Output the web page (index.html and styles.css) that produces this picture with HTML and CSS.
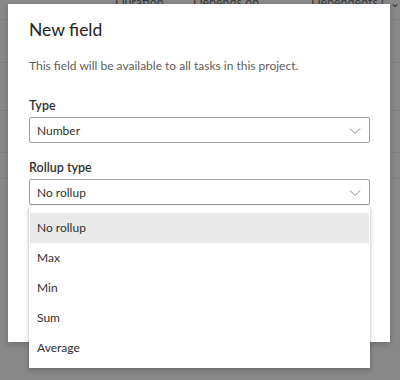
FILE: index.html
```html
<!DOCTYPE html>
<html>
<head>
<meta charset="utf-8">
<link rel="stylesheet" href="styles.css">
</head>
<body>
<div class="page">
  <div class="table-head">
    <span class="col col-duration">Duration <span class="chev">&#8964;</span></span>
    <span class="col col-depends">Depends on <span class="chev">&#8964;</span></span>
    <span class="col col-dependents">Dependents (att</span>
    <span class="col col-last"><span class="chev">&#8964;</span></span>
  </div>
  <div class="rows">
    <div class="row r1"></div>
    <div class="row r2"></div>
    <div class="row r3"></div>
    <div class="row r4"></div>
    <div class="row r5"></div>
  </div>

  <div class="dialog">
    <h1 class="title">New field</h1>
    <p class="desc">This field will be available to all tasks in this project.</p>
    <div class="field">
      <div class="label">Type</div>
      <div class="select">
        <span>Number</span>
        <svg class="caret" width="12" height="8" viewBox="0 0 12 8"><path d="M1 1.5 L6 6.5 L11 1.5" fill="none" stroke="#8a8886" stroke-width="1"/></svg>
      </div>
    </div>
    <div class="field">
      <div class="label">Rollup type</div>
      <div class="select">
        <span>No rollup</span>
        <svg class="caret" width="12" height="8" viewBox="0 0 12 8"><path d="M1 1.5 L6 6.5 L11 1.5" fill="none" stroke="#8a8886" stroke-width="1"/></svg>
      </div>
    </div>
  </div>

  <ul class="menu">
    <li class="item selected">No rollup</li>
    <li class="item">Max</li>
    <li class="item">Min</li>
    <li class="item">Sum</li>
    <li class="item">Average</li>
  </ul>
</div>
</body>
</html>
```

FILE: styles.css
```css
html, body {
  margin: 0;
  padding: 0;
}
body {
  width: 400px;
  height: 380px;
  overflow: hidden;
  font-family: "Lato", "Noto Sans", sans-serif;
  background: #878787;
}
.page {
  position: relative;
  width: 400px;
  height: 380px;
  background: #888888;
}
.table-head {
  height: 10px;
  position: relative;
  color: #3b3b3b;
  font-size: 12.5px;
  line-height: 10px;
  white-space: nowrap;
}
.col {
  position: absolute;
  top: -2px;
}
.col-duration { left: 115px; }
.col-depends { left: 193px; }
.col-dependents { left: 311px; width: 74px; overflow: hidden; }
.col-last { left: 390px; }
.chev { font-size: 12px; }
.rows {
  display: flex;
  flex-direction: column;
}
.row {
  border-bottom: 1px solid #7f7f7f;
}
.r1 { height: 9px; }
.r2 { height: 42px; }
.r3 { height: 47px; }
.r4 { height: 41px; }
.r5 { height: 25px; }

.dialog {
  position: absolute;
  left: 8px;
  top: 4px;
  width: 382px;
  height: 338px;
  box-sizing: border-box;
  background: #ffffff;
  padding: 13px 20px 0 21px;
  box-shadow: 0 2px 6px rgba(0,0,0,0.2);
}
.title {
  margin: 0;
  font-size: 17.5px;
  font-weight: 400;
  color: #252423;
  line-height: 26px;
}
.desc {
  margin: 14px 0 0 0;
  font-size: 12px;
  line-height: 18px;
  color: #605e5c;
}
.field {
  display: flex;
  flex-direction: column;
}
.desc + .field { margin-top: 21px; }
.field + .field { margin-top: 15px; }
.label {
  font-size: 12.5px;
  font-weight: 600;
  color: #323130;
  line-height: 20px;
  margin-bottom: 1px;
}
.select {
  height: 26px;
  box-sizing: border-box;
  border: 1px solid #a19f9d;
  border-radius: 2px;
  display: flex;
  align-items: center;
  justify-content: space-between;
  padding: 0 8px 0 7px;
  font-size: 12px;
  color: #323130;
}
.caret { margin-top: 1px; }

.menu {
  position: absolute;
  left: 29px;
  top: 206px;
  width: 341px;
  box-sizing: border-box;
  margin: 0;
  padding: 7px 1px 5px 1px;
  list-style: none;
  background: #ffffff;
  box-shadow: 0 2px 5px rgba(0,0,0,0.22), 0 0 2px rgba(0,0,0,0.1);
}
.item {
  height: 30px;
  line-height: 30px;
  padding-left: 7px;
  font-size: 12px;
  color: #323130;
}
.item.selected {
  background: #e9e9e9;
}
```
